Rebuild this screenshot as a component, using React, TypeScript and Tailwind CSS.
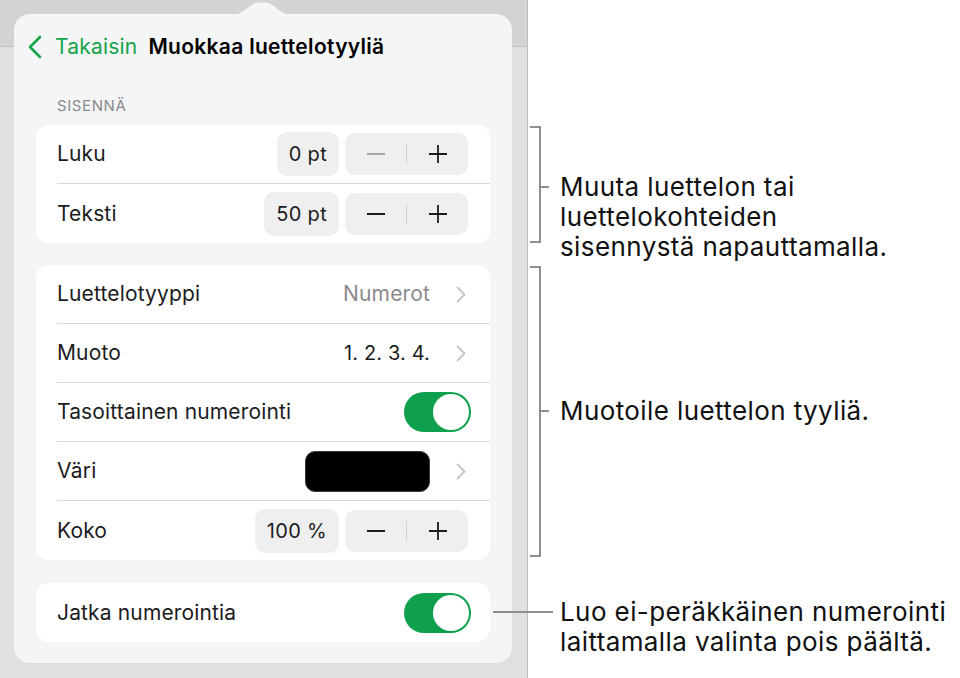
import { ReactNode } from "react";

const font = { fontFamily: "Inter, 'Noto Sans', sans-serif" };

const Chevron = () => (
  <svg width="10" height="17" viewBox="0 0 10 17" className="shrink-0">
    <polyline points="1.5,1.5 8.5,8.5 1.5,15.5" fill="none" stroke="#c5c5c7" strokeWidth="1.8" strokeLinecap="round" strokeLinejoin="round" />
  </svg>
);

const Toggle = () => (
  <div className="w-[67px] h-[40px] rounded-full bg-[#0fa04d] flex items-center justify-end pr-[2px]">
    <div className="w-[36px] h-[36px] rounded-full bg-white" />
  </div>
);

const Stepper = ({ value, minusDisabled }: { value: string; minusDisabled?: boolean }) => (
  <div className="flex items-center gap-[6px]">
    <div className="h-[44px] px-[12px] rounded-[10px] bg-[#efeff0] flex items-center text-[20px] tracking-[0.3px] text-[#1c1c1e]">
      {value}
    </div>
    <div className="h-[42px] w-[123px] rounded-[10px] bg-[#efeff0] flex items-center">
      <div className="flex-1 flex justify-center">
        <svg width="20" height="20" viewBox="0 0 20 20">
          <line x1="1" y1="10" x2="19" y2="10" stroke={minusDisabled ? "#a6a6a8" : "#1c1c1e"} strokeWidth="1.8" />
        </svg>
      </div>
      <div className="w-px h-[20px] bg-[#d3d3d5]" />
      <div className="flex-1 flex justify-center">
        <svg width="20" height="20" viewBox="0 0 20 20">
          <line x1="1" y1="10" x2="19" y2="10" stroke="#1c1c1e" strokeWidth="1.8" />
          <line x1="10" y1="1" x2="10" y2="19" stroke="#1c1c1e" strokeWidth="1.8" />
        </svg>
      </div>
    </div>
  </div>
);

type RowProps = { label: string; children?: ReactNode; last?: boolean; pr?: string };

const Row = ({ label, children, last, pr = "pr-[22px]" }: RowProps) => (
  <div className="pl-[21px] h-[59px]">
    <div className={"h-full flex items-center justify-between " + pr + (last ? "" : " border-b border-[#d9d9db]")}>
      <span className="text-[21px] tracking-[0.15px] text-[#1c1c1e]">{label}</span>
      {children}
    </div>
  </div>
);

const Card = ({ children }: { children: ReactNode }) => (
  <div className="mx-[22px] bg-white rounded-[13px] overflow-hidden">{children}</div>
);

export default function App() {
  return (
    <div className="flex w-[960px] h-[678px] bg-white" style={font}>
      <div className="w-[528px] h-[678px] shrink-0 border-r border-[#bdbdbd] bg-[linear-gradient(to_bottom,#d3d3d3_0,#d3d3d3_46px,#c2c2c2_46px,#c2c2c2_47px,#e0e0e0_47px)] pt-[14px] pl-[14px]">
        <div className="relative w-[498px] h-[649px] bg-[#f4f5f5] rounded-[16px]">
          <svg className="absolute -top-[12px] left-[218px]" width="60" height="13" viewBox="0 0 60 13">
            <path d="M0 13 C12 13 18 1 26 0.5 L34 0.5 C42 1 48 13 60 13 Z" fill="#f4f5f5" />
          </svg>

          <div className="h-[66px] flex items-center pl-[14px]">
            <svg width="14" height="24" viewBox="0 0 14 24">
              <polyline points="12,2 2,12 12,22" fill="none" stroke="#16a34a" strokeWidth="2.6" strokeLinecap="round" strokeLinejoin="round" />
            </svg>
            <span className="ml-[13px] text-[21px] tracking-[0.2px] text-[#16a34a]">Takaisin</span>
            <span className="ml-[11px] text-[21px] tracking-[0.3px] font-semibold text-black">Muokkaa luettelotyyliä</span>
          </div>

          <div className="mt-[17px] pl-[43px] text-[15px] leading-[18px] tracking-[0.6px] text-[#8a8a8e]">SISENNÄ</div>

          <div className="mt-[10px]">
            <Card>
              <Row label="Luku">
                <Stepper value="0 pt" minusDisabled />
              </Row>
              <Row label="Teksti" last>
                <Stepper value="50 pt" />
              </Row>
            </Card>
          </div>

          <div className="mt-[22px]">
            <Card>
              <Row label="Luettelotyyppi" pr="pr-[24px]">
                <div className="flex items-center gap-[26px]">
                  <span className="text-[21px] tracking-[0.15px] text-[#8a8a8e]">Numerot</span>
                  <Chevron />
                </div>
              </Row>
              <Row label="Muoto" pr="pr-[24px]">
                <div className="flex items-center gap-[26px]">
                  <span className="text-[20px] tracking-[0.15px] text-[#1c1c1e]">1. 2. 3. 4.</span>
                  <Chevron />
                </div>
              </Row>
              <Row label="Tasoittainen numerointi" pr="pr-[19px]">
                <Toggle />
              </Row>
              <Row label="Väri" pr="pr-[24px]">
                <div className="flex items-center gap-[26px]">
                  <div className="w-[125px] h-[41px] rounded-[10px] bg-black border border-[#3a3a3a]" />
                  <Chevron />
                </div>
              </Row>
              <Row label="Koko" last>
                <Stepper value="100 %" />
              </Row>
            </Card>
          </div>

          <div className="mt-[23px]">
            <Card>
              <Row label="Jatka numerointia" last pr="pr-[19px]">
                <Toggle />
              </Row>
            </Card>
          </div>
        </div>
      </div>

      <div className="flex-1 pt-[126px] text-[26px] tracking-[0.4px] leading-[30px] text-[#111]">
        <div className="flex h-[117px]">
          <div className="ml-[2px] w-[11px] h-full border-y-2 border-r-2 border-[#8e8e8e]" />
          <div className="flex items-start pt-[46px]">
            <div className="w-[8px] h-[2px] mt-[14px] bg-[#8e8e8e]" />
            <p className="ml-[11px] whitespace-nowrap">
              Muuta luettelon tai
              <br />
              luettelokohteiden
              <br />
              sisennystä napauttamalla.
            </p>
          </div>
        </div>

        <div className="flex h-[291px] mt-[23px]">
          <div className="ml-[2px] w-[11px] h-full border-y-2 border-r-2 border-[#8e8e8e]" />
          <div className="flex items-start pt-[130px]">
            <div className="w-[8px] h-[2px] mt-[14px] bg-[#8e8e8e]" />
            <p className="ml-[11px] whitespace-nowrap">Muotoile luettelon tyyliä.</p>
          </div>
        </div>

        <div className="flex items-start mt-[40px]">
          <div className="relative z-10 -ml-[35px] w-[60px] h-[2px] mt-[14px] bg-[#8e8e8e]" />
          <p className="ml-[7px] whitespace-nowrap">
            Luo ei-peräkkäinen numerointi
            <br />
            laittamalla valinta pois päältä.
          </p>
        </div>
      </div>
    </div>
  );
}
